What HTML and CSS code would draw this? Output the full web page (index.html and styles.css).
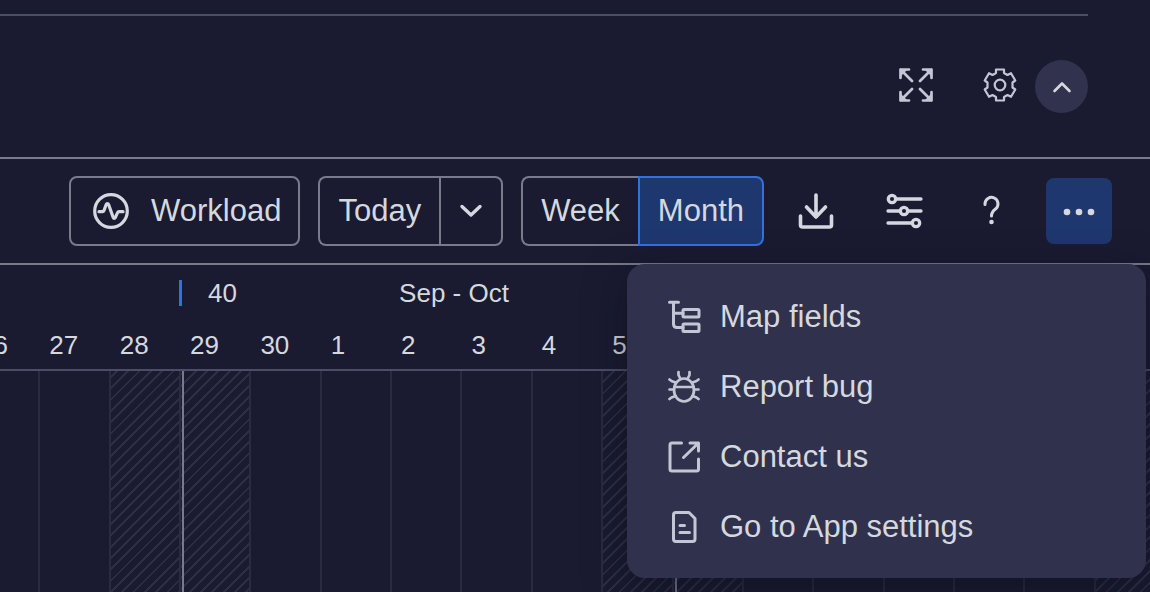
FILE: index.html
```html
<!DOCTYPE html>
<html lang="en">
<head>
    <meta charset="UTF-8">
    <meta name="viewport" content="width=device-width, initial-scale=1.0">
    <title>Gantt</title>
    <link rel="stylesheet" href="styles.css">
</head>
<body>
    <header class="widget-header">
        <button class="plain-btn" aria-label="Full screen">
            <svg width="34" height="34" viewBox="0 0 34 34" stroke-width="2.7">
                <path d="M10 1.5H1.5V10M1.5 1.5L13 13M24 1.5h8.5V10M32.5 1.5L21 13M10 32.5H1.5V24M1.5 32.5L13 21M24 32.5h8.5V24M32.5 32.5L21 21"/>
                <path class="fill" d="M1 1h8L1 9zM33 1h-8l8 8zM1 33h8l-8-8zM33 33h-8l8-8z"/>
            </svg>
        </button>
        <button class="plain-btn gear-btn" aria-label="Settings">
            <svg width="34" height="34" viewBox="0 0 34 34" stroke-width="2.2">
                <path d="M13 1.500h8V5l3.500 2L28 5.200l4.300 7.300-2.800 2v5l2.800 2-4.300 7.300-3.500-1.800L21 29v3.500h-8V29l-3.500-2L6 28.800 1.700 21.500l2.800-2v-5l-2.800-2L6 5.200 9.500 7 13 5z"/>
                <circle cx="17" cy="17" r="5.300"/>
            </svg>
        </button>
        <button class="collapse-btn" aria-label="Collapse">
            <svg width="20" height="20" viewBox="0 0 20 20" stroke-width="2.6">
                <path d="M2.500 14l7.500-7.500 7.500 7.500"/>
            </svg>
        </button>
    </header>

    <div class="toolbar">
        <button class="btn workload-btn">
            <svg width="36" height="36" viewBox="0 0 36 36" stroke-width="3.2">
                <circle cx="18" cy="18" r="16.300"/>
                <path d="M6 18.700h3.500c.8 0 1.200-.4 1.500-1.200l2.200-6c.5-1.300 1.900-1.300 2.400 0l4.600 13c.5 1.300 1.500 1.300 2.100.1l2-4.500c.4-1 .9-1.400 1.900-1.400H30"/>
            </svg>
            Workload
        </button>

        <div class="group">
            <button class="btn today-btn">Today</button>
            <button class="btn arrow-btn" aria-label="Choose date">
                <svg width="26" height="26" viewBox="0 0 26 26" stroke-width="3.4">
                    <path d="M4 8.500l9 8.500 9-8.500"/>
                </svg>
            </button>
        </div>

        <div class="group">
            <button class="btn">Week</button>
            <button class="btn active">Month</button>
        </div>

        <div class="icons">
            <button class="icon-btn" aria-label="Export">
                <svg width="40" height="40" viewBox="0 0 40 40" stroke-width="3.6">
                    <path d="M21 4v21M11.500 16l9.500 10 9.500-10M5.500 25v9q0 2 2 2h27q2 0 2-2v-9"/>
                </svg>
            </button>
            <button class="icon-btn" aria-label="Filters">
                <svg width="40" height="40" viewBox="0 0 40 40" stroke-width="3.300">
                    <path d="M13 8h25M5 20h12M25 20h13M5 32h24"/>
                    <circle cx="9" cy="8" r="3.700"/>
                    <circle cx="21" cy="20" r="3.700"/>
                    <circle cx="33" cy="32" r="3.700"/>
                </svg>
            </button>
            <button class="icon-btn" aria-label="Help">
                <svg width="40" height="40" viewBox="0 0 40 40" stroke-width="3">
                    <path d="M14 13.500v-.500a6.500 6.500 0 1 1 10.500 5C22 19.800 20.500 21 20.500 25"/>
                    <circle class="fill" cx="20.500" cy="31" r="2.300"/>
                </svg>
            </button>
            <button class="icon-btn open" aria-label="More" aria-expanded="true">
                <svg width="40" height="40" viewBox="0 0 40 40">
                    <circle class="fill" cx="8" cy="21" r="3.300"/>
                    <circle class="fill" cx="20" cy="21" r="3.300"/>
                    <circle class="fill" cx="32" cy="21" r="3.300"/>
                </svg>
            </button>
        </div>

        <div class="menu">
            <button class="menu-item">
                <svg width="34" height="34" viewBox="0 0 34 34" stroke-width="3">
                    <path d="M1.500 2.300h9M5.500 2.300V24q0 3.500 3.500 3.500h6M5.500 13.300H15"/>
                    <rect x="15" y="9.500" width="16" height="7.500" rx="1"/>
                    <rect x="15" y="24" width="16" height="7.500" rx="1"/>
                </svg>
                Map fields
            </button>
            <button class="menu-item">
                <svg width="34" height="34" viewBox="0 0 34 34" stroke-width="2.700">
                    <ellipse cx="16" cy="20" rx="10" ry="11.500"/>
                    <path d="M6.500 17h19M10.500 2v3l2 4M21.500 2v3l-2 4M1.500 9.500l2 1.500 4 1.500M30.500 9.500l-2 1.500-4 1.500M1.500 19.500H6M26 19.500h4.500M1.500 29l2-1.500L7.500 26M30.500 29l-2-1.500-4-1.500"/>
                </svg>
                Report bug
            </button>
            <button class="menu-item">
                <svg width="34" height="34" viewBox="0 0 34 34" stroke-width="3">
                    <path d="M13.500 3H4q-2 0-2 2v24q0 2 2 2h24.500q2 0 2-2V19M22 3h8.500v8M30.500 3L15.500 17.500"/>
                </svg>
                Contact us
            </button>
            <button class="menu-item">
                <svg width="34" height="34" viewBox="0 0 34 34" stroke-width="3">
                    <path d="M21 2.500H8q-2.500 0-2.500 2.500v24q0 2.500 2.500 2.500h16.500q2.500 0 2.500-2.500V8.500zM12 15.500h4.500M12 22.500h9.500"/>
                </svg>
                Go to App settings
            </button>
        </div>
    </div>

    <main class="timeline">
        <div class="row weeks">
            <span class="week-number">40</span>
            <span class="week-label">Sep - Oct</span>
        </div>
        <div class="row days">
            <span>26</span><span>27</span><span>28</span><span>29</span><span>30</span><span>1</span>
            <span>2</span><span>3</span><span>4</span><span>5</span><span>6</span><span>7</span>
            <span>8</span><span>9</span><span>10</span><span>11</span><span>12</span>
        </div>
        <div class="row cells">
            <div class="cell"></div>
            <div class="cell"></div>
            <div class="cell off"></div>
            <div class="cell off week-start"></div>
            <div class="cell"></div>
            <div class="cell"></div>
            <div class="cell"></div>
            <div class="cell"></div>
            <div class="cell"></div>
            <div class="cell off"></div>
            <div class="cell off week-start"></div>
            <div class="cell"></div>
            <div class="cell"></div>
            <div class="cell"></div>
            <div class="cell"></div>
            <div class="cell"></div>
            <div class="cell off"></div>
        </div>
    </main>
</body>
</html>
```
FILE: styles.css
```css
* {
    margin: 0;
    padding: 0;
    box-sizing: border-box;
}

body {
    font-family: "Liberation Sans", Arial, sans-serif;
    background: #1a1b31;
    color: #d5d8df;
    height: 100vh;
    padding-top: 14px;
    display: flex;
    flex-direction: column;
    overflow: hidden;
}

button {
    font: inherit;
    color: inherit;
    background: none;
    border: none;
    cursor: pointer;
}

svg {
    display: block;
    flex-shrink: 0;
    fill: none;
    stroke: currentColor;
    stroke-linecap: round;
    stroke-linejoin: round;
}

.fill {
    fill: currentColor;
    stroke: none;
}

/* widget header */
.widget-header {
    margin-right: 62px;
    padding: 44px 0;
    border-top: 2px solid #4c4e68;
    display: flex;
    justify-content: flex-end;
    align-items: center;
    line-height: 1;
}

.plain-btn {
    color: #c3c6d4;
    padding-bottom: 4px;
}

.gear-btn {
    margin: 0 18px 0 50px;
}

.collapse-btn {
    width: 53px;
    height: 53px;
    border-radius: 50%;
    background: #30324e;
    display: flex;
    align-items: center;
    justify-content: center;
}

/* toolbar */
.toolbar {
    position: relative;
    z-index: 2;
    padding: 17px 38px 17px 20px;
    border-top: 2px solid #797b8d;
    border-bottom: 2px solid #797b8d;
    display: flex;
    justify-content: flex-end;
    align-items: center;
    gap: 18px;
    font-size: 31px;
}

.btn {
    height: 70px;
    padding: 0 18px;
    border: 2px solid #797b8d;
    border-radius: 8px;
    display: flex;
    align-items: center;
}

.workload-btn {
    padding: 0 17px 0 22px;
    gap: 22px;
}

.group {
    display: flex;
}

.group .btn:first-child {
    border-radius: 8px 0 0 8px;
    border-right: none;
}

.group .btn:last-child {
    border-radius: 0 8px 8px 0;
}

.btn.arrow-btn {
    padding: 0 17px;
}

.btn.active {
    background: #1f376f;
    border-color: #3371e2;
}

.icons {
    display: flex;
    gap: 22px;
}

.icon-btn {
    width: 66px;
    height: 66px;
    border-radius: 8px;
    display: flex;
    align-items: center;
    justify-content: center;
}

.icon-btn.open {
    background: #1f376f;
}

/* dropdown menu */
.menu {
    position: absolute;
    top: 100%;
    right: 4px;
    width: 519px;
    margin-top: 1px;
    padding: 18px 0 16px;
    border-radius: 18px;
    background: #30324d;
    box-shadow: 0 12px 40px rgba(9, 11, 25, 0.5);
    font-size: 31px;
}

.menu-item {
    width: 100%;
    height: 70px;
    padding: 0 41px;
    display: flex;
    align-items: center;
    gap: 18px;
}

.menu-item svg {
    color: #c3c6d4;
}

/* timeline */
.timeline {
    flex: 1;
    display: flex;
    flex-direction: column;
    font-size: 26px;
}

.row {
    width: calc(100% + 46px);
    margin-left: -32px;
    display: grid;
    grid-template-columns: repeat(17, 1fr);
    align-items: center;
}

.weeks {
    height: 56px;
}

.week-number {
    grid-column: 4;
    padding-left: 26px;
    border-left: 3px solid #3371e2;
    line-height: 26px;
}

.week-label {
    grid-column: 7 / span 3;
    padding-left: 9px;
}

.days {
    height: 50px;
    border-bottom: 2px solid #4c4e68;
}

.days span {
    padding-left: 11px;
}

.cells {
    flex: 1;
    align-items: stretch;
}

.cell {
    position: relative;
    border-left: 2px solid #2a2b41;
}

.off {
    background: repeating-linear-gradient(-45deg, transparent 0 6px, #2d2e44 6px 8px) fixed;
    background-clip: padding-box;
}

.week-start::before {
    content: "";
    position: absolute;
    left: 1px;
    top: 0;
    bottom: 0;
    width: 2px;
    background: #797b8d;
}
```
